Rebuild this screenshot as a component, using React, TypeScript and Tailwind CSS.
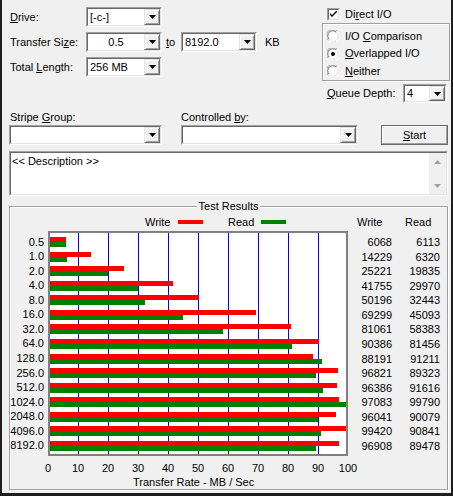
import type { ReactNode } from "react";

// ─── Data ─────────────────────────────────────────────────────────────────────

const SIZES = ["0.5", "1.0", "2.0", "4.0", "8.0", "16.0", "32.0", "64.0", "128.0", "256.0", "512.0", "1024.0", "2048.0", "4096.0", "8192.0"];
const WRITE = [6068, 14229, 25221, 41755, 50196, 69299, 81061, 90386, 88191, 96821, 96386, 97083, 96041, 99420, 96908];
const READ = [6113, 6320, 19835, 29970, 32443, 45093, 58383, 81456, 91211, 89323, 91616, 99790, 90079, 90841, 89478];

const PITCH = 14.57;

// ─── Small win32 widgets ──────────────────────────────────────────────────────

function U({ children }: { children: ReactNode }) {
  return <span className="underline underline-offset-[1px]">{children}</span>;
}

function Arrow() {
  return (
    <div className="w-[16px] h-full flex items-center justify-center bg-[#f0f0f0] border border-t-[#e3e3e3] border-l-[#e3e3e3] border-b-[#696969] border-r-[#696969] shadow-[inset_1px_1px_0_#fff,inset_-1px_-1px_0_#a0a0a0]">
      <svg width="7" height="4" viewBox="0 0 7 4">
        <path d="M0 0h7L3.5 4z" fill="#000" />
      </svg>
    </div>
  );
}

function Combo({ className, text = "", center = false }: { className: string; text?: string; center?: boolean }) {
  return (
    <div className={`flex border border-t-[#a0a0a0] border-l-[#a0a0a0] border-b-white border-r-white ${className}`}>
      <div className="flex-1 flex border border-t-[#696969] border-l-[#696969] border-b-[#e3e3e3] border-r-[#e3e3e3] bg-white">
        <div className={`flex-1 flex items-center px-[2px] ${center ? "justify-center" : ""}`}>{text}</div>
        <Arrow />
      </div>
    </div>
  );
}

function Radio({ checked = false }: { checked?: boolean }) {
  return (
    <svg width="12" height="12" viewBox="0 0 12 12">
      <circle cx="6" cy="6" r="5.5" fill="#fff" />
      <path d="M1.2 10.2A5.5 5.5 0 0 1 10.2 1.2" stroke="#a0a0a0" fill="none" />
      <path d="M2.2 9.2A4.3 4.3 0 0 1 9.2 2.2" stroke="#696969" fill="none" />
      <path d="M10.8 1.8A5.5 5.5 0 0 1 1.8 10.8" stroke="#fff" fill="none" />
      <path d="M9.8 2.8A4.3 4.3 0 0 1 2.8 9.8" stroke="#e3e3e3" fill="none" />
      {checked && <circle cx="6" cy="6" r="2" fill="#000" />}
    </svg>
  );
}

const etched = "border border-[#a0a0a0] shadow-[1px_1px_0_#fff,inset_1px_1px_0_#fff]";

// ─── Chart ────────────────────────────────────────────────────────────────────

function Plot() {
  return (
    <div className="w-[300px] h-[225px] border-2 border-[#808080] bg-white">
      <svg width="296" height="221" shapeRendering="crispEdges">
        {[1, 2, 3, 4, 5, 6, 7, 8, 9].map((k) => (
          <line key={k} x1={30 * k - 2} x2={30 * k - 2} y1={0} y2={221} stroke="#0000ff" />
        ))}
        {SIZES.map((s, i) => (
          <g key={s}>
            <rect x={0} y={4 + PITCH * i} width={WRITE[i] * 0.003 - 2} height={5} fill="#ff0000" />
            <rect x={0} y={9 + PITCH * i} width={READ[i] * 0.003 - 2} height={5} fill="#008000" />
          </g>
        ))}
      </svg>
    </div>
  );
}

// ─── App ──────────────────────────────────────────────────────────────────────

export default function App() {
  return (
    <div className="w-[453px] h-[496px] overflow-hidden bg-[#f0f0f0] border-l-2 border-r-2 border-b-[3px] border-[#1e1e1e] text-[11px] leading-[13px] text-black select-none font-['Liberation_Sans',Arial,sans-serif]">
      {/* top options */}
      <div className="flex h-[104px]">
        <div className="w-[320px] pl-[8px] pt-[7px] flex flex-col gap-[5px]">
          <div className="flex items-center">
            <span className="w-[76px]"><U>D</U>rive:</span>
            <Combo className="w-[76px] h-[20px]" text="[-c-]" />
          </div>
          <div className="flex items-center">
            <span className="w-[76px]">Transfer Si<U>z</U>e:</span>
            <Combo className="w-[76px] h-[20px]" text="0.5" center />
            <span className="w-[19px] pl-[4px]"><U>t</U>o</span>
            <Combo className="w-[76px] h-[20px]" text="8192.0" />
            <span className="ml-[8px]">KB</span>
          </div>
          <div className="flex items-center">
            <span className="w-[76px]">Total <U>L</U>ength:</span>
            <Combo className="w-[76px] h-[20px]" text="256 MB" />
          </div>
        </div>

        <div className="w-[128px] pt-[8px] flex flex-col">
          <div className="h-[13px] flex items-center pl-[5px] gap-[5px]">
            <div className="w-[13px] h-[13px] flex border border-t-[#a0a0a0] border-l-[#a0a0a0] border-b-white border-r-white">
              <div className="flex-1 bg-white border border-t-[#696969] border-l-[#696969] border-b-[#e3e3e3] border-r-[#e3e3e3] flex items-center justify-center">
                <svg width="7" height="7" viewBox="0 0 7 7">
                  <path d="M0 2v2l2 2 5-5V-1L2 4z" fill="#000" />
                </svg>
              </div>
            </div>
            <span>Di<U>r</U>ect I/O</span>
          </div>
          <div className={`mt-[2px] h-[58px] ${etched} flex flex-col pl-[4px] pt-[6px] gap-[5.5px]`}>
            <div className="h-[12px] flex items-center gap-[6px]">
              <Radio />
              <span>I/O <U>C</U>omparison</span>
            </div>
            <div className="h-[12px] flex items-center gap-[6px]">
              <Radio checked />
              <span><U>O</U>verlapped I/O</span>
            </div>
            <div className="h-[12px] flex items-center gap-[6px]">
              <Radio />
              <span><U>N</U>either</span>
            </div>
          </div>
          <div className="mt-[3px] flex items-center pl-[5px]">
            <span className="w-[76px]"><U>Q</U>ueue Depth:</span>
            <Combo className="w-[44px] h-[19px]" text="4" />
          </div>
        </div>
      </div>

      {/* stripe / controller */}
      <div className="flex pl-[8px] mt-[7px] h-[13px]">
        <span className="w-[171px]">Stripe <U>G</U>roup:</span>
        <span>Controlled <U>b</U>y:</span>
      </div>
      <div className="flex items-start pl-[7px] mt-[1px]">
        <Combo className="w-[153px] h-[20px]" />
        <Combo className="ml-[19px] w-[177px] h-[20px]" />
        <button className="ml-[23px] w-[67px] h-[20px] border border-[#696969] flex">
          <span className="flex-1 flex items-center justify-center bg-[#f0f0f0] border border-t-white border-l-white border-b-[#a0a0a0] border-r-[#a0a0a0]">
            <span><U>S</U>tart</span>
          </span>
        </button>
      </div>

      {/* description */}
      <div className="mt-[6px] ml-[7px] w-[439px] h-[45px] flex border border-t-[#a0a0a0] border-l-[#a0a0a0] border-b-white border-r-white">
        <div className="flex-1 flex bg-white border border-t-[#696969] border-l-[#696969] border-b-[#e3e3e3] border-r-[#e3e3e3]">
          <div className="flex-1 pl-[1px] pt-[2px]">&lt;&lt; Description &gt;&gt;</div>
          <div className="w-[17px] bg-[#f0f0f0] flex flex-col justify-between">
            <div className="h-[17px] flex items-center justify-center">
              <svg width="7" height="4" viewBox="0 0 7 4">
                <path d="M3.5 0L7 4H0z" fill="#a0a0a0" />
              </svg>
            </div>
            <div className="h-[17px] flex items-center justify-center">
              <svg width="7" height="4" viewBox="0 0 7 4">
                <path d="M0 0h7L3.5 4z" fill="#a0a0a0" />
              </svg>
            </div>
          </div>
        </div>
      </div>

      {/* test results */}
      <div className={`relative mt-[10px] ml-[7px] w-[439px] h-[284px] ${etched} flex`}>
        <span className="absolute left-1/2 -translate-x-1/2 top-[-7px] px-[2px] bg-[#f0f0f0] whitespace-nowrap">Test Results</span>

        <div className="w-[338px] flex flex-col">
          <div className="h-[24px] pt-[7px] flex items-center">
            <span className="ml-[135px] w-[33px]">Write</span>
            <span className="w-[25px] h-[4px] bg-[#ff0000]" />
            <span className="ml-[25px] w-[33px]">Read</span>
            <span className="w-[25px] h-[4px] bg-[#008000]" />
          </div>
          <div className="flex">
            <div className="w-[38px] pr-[4px] pt-[6px] flex flex-col items-end">
              {SIZES.map((s) => (
                <div key={s} className="h-[14.57px] leading-[10px] whitespace-nowrap">{s}</div>
              ))}
            </div>
            <Plot />
          </div>
          <div className="mt-[6.5px] ml-[38px] w-[300px] flex justify-between">
            {[0, 10, 20, 30, 40, 50, 60, 70, 80, 90, 100].map((t) => (
              <div key={t} className="w-0 flex justify-center whitespace-nowrap">{t}</div>
            ))}
          </div>
          <div className="mt-[1px] pl-[123px] whitespace-nowrap">Transfer Rate - MB / Sec</div>
        </div>

        <div className="flex-1 flex flex-col">
          <div className="h-[24px] pt-[7px] flex items-center">
            <span className="ml-[9px] w-[48px]">Write</span>
            <span>Read</span>
          </div>
          <div className="pt-[6px] flex">
            <div className="w-[44px] flex flex-col items-end">
              {WRITE.map((v, i) => (
                <div key={i} className="h-[14.57px] leading-[10px]">{v}</div>
              ))}
            </div>
            <div className="w-[48px] flex flex-col items-end">
              {READ.map((v, i) => (
                <div key={i} className="h-[14.57px] leading-[10px]">{v}</div>
              ))}
            </div>
          </div>
        </div>
      </div>
    </div>
  );
}
